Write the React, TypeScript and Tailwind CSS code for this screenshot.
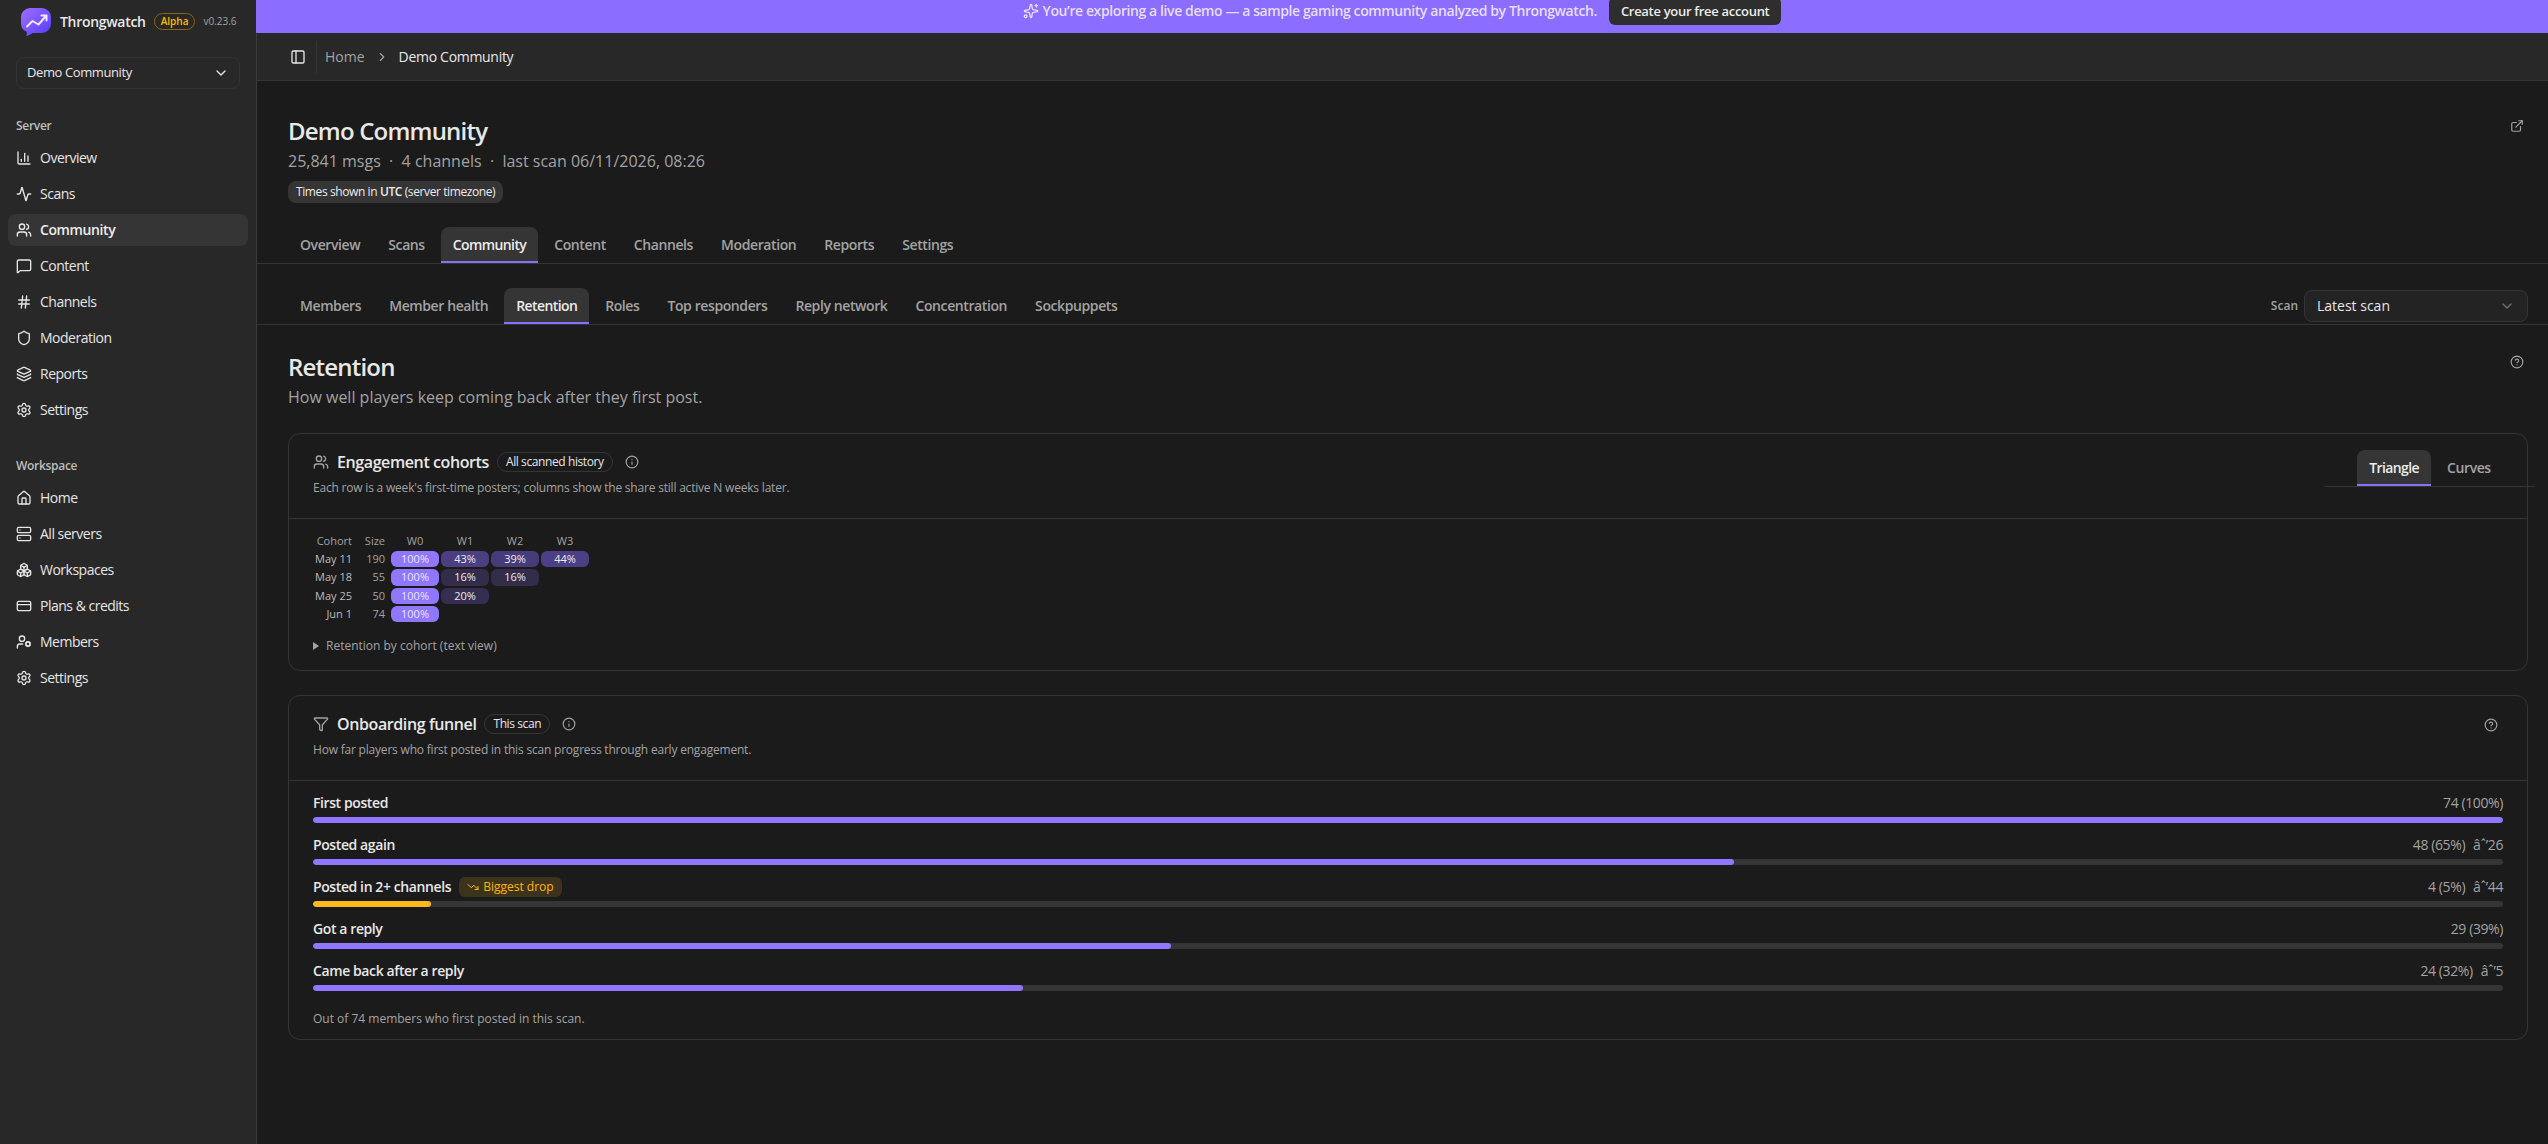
import React from 'react';
import {
  Activity,
  Boxes,
  ChartColumn,
  ChevronDown,
  ChevronRight,
  CircleHelp,
  CreditCard,
  ExternalLink,
  Funnel,
  Hash,
  House,
  Info,
  Layers,
  MessageSquare,
  PanelLeft,
  Server,
  Settings,
  Shield,
  Sparkles,
  TrendingDown,
  UserCog,
  Users,
} from 'lucide-react';

const serverNav = [
  { label: 'Overview', icon: ChartColumn },
  { label: 'Scans', icon: Activity },
  { label: 'Community', icon: Users, active: true },
  { label: 'Content', icon: MessageSquare },
  { label: 'Channels', icon: Hash },
  { label: 'Moderation', icon: Shield },
  { label: 'Reports', icon: Layers },
  { label: 'Settings', icon: Settings },
];

const workspaceNav = [
  { label: 'Home', icon: House },
  { label: 'All servers', icon: Server },
  { label: 'Workspaces', icon: Boxes },
  { label: 'Plans & credits', icon: CreditCard },
  { label: 'Members', icon: UserCog },
  { label: 'Settings', icon: Settings },
];

const mainTabs = ['Overview', 'Scans', 'Community', 'Content', 'Channels', 'Moderation', 'Reports', 'Settings'];

const subTabs = [
  'Members',
  'Member health',
  'Retention',
  'Roles',
  'Top responders',
  'Reply network',
  'Concentration',
  'Sockpuppets',
];

const cohorts = [
  { week: 'May 11', size: 190, values: [100, 43, 39, 44] },
  { week: 'May 18', size: 55, values: [100, 16, 16] },
  { week: 'May 25', size: 50, values: [100, 20] },
  { week: 'Jun 1', size: 74, values: [100] },
];

const cellColors: Record<number, string> = {
  100: 'bg-[#9177ff] text-[#e9e4fb]',
  44: 'bg-[#4c3f86] text-[#ececec]',
  43: 'bg-[#4b3f82] text-[#ececec]',
  39: 'bg-[#473c79] text-[#ececec]',
  20: 'bg-[#352e50] text-[#ececec]',
  16: 'bg-[#332d4a] text-[#ececec]',
};

const funnel = [
  { label: 'First posted', count: 74, pct: 100 },
  { label: 'Posted again', count: 48, pct: 65, drop: 'âˆ’26' },
  { label: 'Posted in 2+ channels', count: 4, pct: 5, drop: 'âˆ’44', biggest: true },
  { label: 'Got a reply', count: 29, pct: 39 },
  { label: 'Came back after a reply', count: 24, pct: 32, drop: 'âˆ’5' },
];

const Logo: React.FC = () => (
  <svg width="32" height="30" viewBox="0 0 32 30" fill="none">
    <defs>
      <linearGradient id="logo" x1="4" y1="2" x2="28" y2="28" gradientUnits="userSpaceOnUse">
        <stop stopColor="#9a6bff" />
        <stop offset="1" stopColor="#5b3fff" />
      </linearGradient>
    </defs>
    <path
      d="M10 1h12a9 9 0 0 1 9 9v7a9 9 0 0 1-9 9H13l-6.500 3.200 .3-4.400A9 9 0 0 1 1 17v-7a9 9 0 0 1 9-9z"
      fill="url(#logo)"
    />
    <path d="M7 19.500l5.500-5.500 6 3.500 7-8" stroke="#efe9ff" strokeWidth="2" strokeLinecap="round" strokeLinejoin="round" />
    <path d="M21.500 8.500h5v5" stroke="#efe9ff" strokeWidth="2" strokeLinecap="round" strokeLinejoin="round" />
  </svg>
);

type NavItem = { label: string; icon: React.ElementType; active?: boolean };

const NavGroup: React.FC<{ title: string; items: NavItem[] }> = ({ title, items }) => (
  <div className="px-2">
    <div className="flex h-8 items-center px-2 text-xs font-semibold tracking-[-0.3px] text-[#bdbdbd]">{title}</div>
    <ul className="flex flex-col gap-1">
      {items.map(({ label, icon: Icon, active }) => (
        <li
          key={label}
          className={
            active
              ? 'flex h-8 items-center gap-2 rounded-lg bg-[#353535] px-2 text-sm font-semibold tracking-[-0.4px] text-[#ececec]'
              : 'flex h-8 items-center gap-2 rounded-lg px-2 text-sm font-medium tracking-[-0.5px] text-[#e6e6e6]'
          }
        >
          <Icon className="size-4 shrink-0" />
          <span>{label}</span>
        </li>
      ))}
    </ul>
  </div>
);

const Tabs: React.FC<{ items: string[]; active: string }> = ({ items, active }) => (
  <div className="flex gap-1">
    {items.map((item) => (
      <div
        key={item}
        className={
          item === active
            ? 'flex h-9 items-center rounded-t-lg border-b-2 border-[#8b6dff] bg-[#353535] px-3 pt-0.5 text-sm font-semibold tracking-[-0.6px] text-[#ececec]'
            : 'flex h-9 items-center px-3 text-sm font-semibold tracking-[-0.4px] text-[#a3a3a3]'
        }
      >
        {item}
      </div>
    ))}
  </div>
);

const CardHeader: React.FC<{ icon: React.ElementType; title: string; badge: string; note: string; children?: React.ReactNode }> = ({
  icon: Icon,
  title,
  badge,
  note,
  children,
}) => (
  <div className="flex h-[85px] justify-between border-b border-[#353535] px-6 pt-4">
    <div>
      <div className="flex h-6 items-center">
        <Icon className="size-4 text-[#a3a3a3]" />
        <h3 className="ml-2 text-base font-semibold tracking-[-0.4px] text-[#e8e8e8]">{title}</h3>
        <span className="ml-2 flex h-5 items-center rounded-full border border-[#353535] px-2 text-xs font-medium tracking-[-0.4px] text-[#e6e6e6]">
          {badge}
        </span>
        <Info className="ml-3 size-3.5 text-[#a3a3a3]" />
      </div>
      <p className="mt-1 text-xs leading-5 tracking-[-0.2px] text-[#a3a3a3]">{note}</p>
    </div>
    {children}
  </div>
);

const CohortTable: React.FC = () => (
  <div className="flex flex-col gap-0.5 text-[11px] leading-4">
    <div className="flex gap-0.5 text-[#a3a3a3]">
      <span className="w-[39px] text-right">Cohort</span>
      <span className="mr-1 w-[31px] text-right">Size</span>
      {['W0', 'W1', 'W2', 'W3'].map((w) => (
        <span key={w} className="w-12 text-center">
          {w}
        </span>
      ))}
    </div>
    {cohorts.map((row) => (
      <div key={row.week} className="flex gap-0.5">
        <span className="w-[39px] text-right font-medium text-[#bdbdbd]">{row.week}</span>
        <span className="mr-1 w-[31px] text-right text-[#a3a3a3]">{row.size}</span>
        {row.values.map((v, i) => (
          <span key={i} className={`h-[16.3px] w-12 rounded-md text-center font-medium ${cellColors[v]}`}>
            {v}%
          </span>
        ))}
      </div>
    ))}
  </div>
);

const FunnelRows: React.FC = () => (
  <div className="flex flex-col gap-3">
    {funnel.map((step) => (
      <div key={step.label} className="flex h-[30px] flex-col justify-between">
        <div className="flex h-5 items-center justify-between text-sm">
          <div className="flex items-center gap-2">
            <span className="font-semibold tracking-[-0.4px] text-[#e8e8e8]">{step.label}</span>
            {step.biggest && (
              <span className="flex h-5 items-center gap-1 rounded-md bg-[#3d321b] px-2 text-xs font-medium text-[#ffb900]">
                <TrendingDown className="size-3" />
                Biggest drop
              </span>
            )}
          </div>
          <div className="flex gap-2 tracking-[-0.4px] text-[#a3a3a3]">
            <span>
              {step.count} ({step.pct}%)
            </span>
            {step.drop && <span>{step.drop}</span>}
          </div>
        </div>
        <div className="h-1.5 overflow-hidden rounded-full bg-[#353535]">
          <div
            className={step.biggest ? 'h-full rounded-full bg-[#ffb91f]' : 'h-full rounded-full bg-[#9177ff]'}
            style={{ width: `${(step.count / 74) * 100}%` }}
          />
        </div>
      </div>
    ))}
  </div>
);

export default function App() {
  return (
    <div className="flex h-[1144px] w-[2548px] overflow-hidden bg-[#1b1b1b] font-['Open_Sans',sans-serif]">
      <aside className="flex w-[257px] shrink-0 flex-col border-r border-[#3a3a3a] bg-[#282828]">
        <div className="flex h-[43px] items-center pl-5">
          <Logo />
          <span className="ml-2 text-sm font-semibold tracking-[-0.3px] text-[#e8e8e8]">Throngwatch</span>
          <span className="ml-2 flex h-[17px] items-center rounded-full border border-[#8a6510] px-1.5 text-[10px] font-semibold text-[#ffb900]">
            Alpha
          </span>
          <span className="ml-2 text-[10px] text-[#a3a3a3]">v0.23.6</span>
        </div>
        <div className="mx-4 mt-3.5 flex h-8 items-center justify-between rounded-lg border border-[#333] px-2.5 text-[13px] text-[#e6e6e6]">
          <span className="tracking-[-0.4px]">Demo Community</span>
          <ChevronDown className="size-4" />
        </div>
        <div className="mt-[21px] flex flex-col gap-6">
          <NavGroup title="Server" items={serverNav} />
          <NavGroup title="Workspace" items={workspaceNav} />
        </div>
      </aside>

      <div className="flex min-w-0 flex-1 flex-col">
        <div className="-ml-px flex h-[33px] shrink-0 justify-center bg-[#8b6dff] text-sm font-semibold text-[#e6defc]">
          <div className="-mt-px flex h-6 items-center">
            <Sparkles className="size-4" />
            <span className="ml-1 tracking-[-0.4px]">
              You’re exploring a live demo — a sample gaming community analyzed by Throngwatch.
            </span>
            <span className="ml-3 flex h-7 items-center rounded-md bg-[#2e2e2e] px-3 text-[13px] tracking-[-0.3px] text-[#ececec]">
              Create your free account
            </span>
          </div>
        </div>
        <header className="flex h-12 shrink-0 items-center border-b border-[#353535] bg-[#282828] pl-[33px] text-sm">
          <PanelLeft className="size-4 text-[#e6e6e6]" />
          <div className="ml-2.5 h-8 w-px bg-[#353535]" />
          <span className="ml-2 text-[#a3a3a3]">Home</span>
          <ChevronRight className="mx-2.5 size-3.5 text-[#a3a3a3]" />
          <span className="tracking-[-0.3px] text-[#e8e8e8]">Demo Community</span>
        </header>

        <div className="flex justify-between pt-8 pr-5 pl-[31px]">
          <div>
            <h1 className="text-2xl leading-9 font-semibold tracking-[-0.8px] text-[#e8e8e8]">Demo Community</h1>
            <p className="text-base leading-6 whitespace-pre text-[#a3a3a3]">25,841 msgs  ·  4 channels  ·  last scan 06/11/2026, 08:26</p>
            <div className="mt-2 flex h-[22px] w-fit items-center rounded-lg bg-[#353535] px-2 text-xs font-medium tracking-[-0.4px] text-[#ececec]">
              <span>
                Times shown in <span className="font-semibold">UTC</span> (server timezone)
              </span>
            </div>
          </div>
          <ExternalLink className="mt-1.5 mr-1 size-3.5 text-[#a3a3a3]" />
        </div>

        <div className="mt-6 border-b border-[#353535] pl-[31px]">
          <Tabs items={mainTabs} active="Community" />
        </div>
        <div className="flex h-[61px] items-end justify-between border-b border-[#353535] pr-5 pl-[31px]">
          <Tabs items={subTabs} active="Retention" />
          <div className="mb-0.5 flex items-center gap-1.5">
            <span className="text-xs font-semibold text-[#a3a3a3]">Scan</span>
            <div className="flex h-8 w-56 items-center justify-between rounded-lg border border-[#353535] bg-[#232323] px-3 text-sm text-[#e6e6e6]">
              <span>Latest scan</span>
              <ChevronDown className="size-4 text-[#6f6f6f]" />
            </div>
          </div>
        </div>

        <main className="flex flex-col pr-5 pl-[31px]">
          <div className="flex justify-between pt-6">
            <div>
              <h2 className="text-2xl leading-9 font-semibold tracking-[-0.8px] text-[#e8e8e8]">Retention</h2>
              <p className="text-base leading-6 text-[#a3a3a3]">How well players keep coming back after they first post.</p>
            </div>
            <CircleHelp className="mt-1.5 mr-1 size-3.5 text-[#a3a3a3]" />
          </div>

          <section className="mt-6 h-[238px] rounded-xl border border-[#353535]">
            <CardHeader
              icon={Users}
              title="Engagement cohorts"
              badge="All scanned history"
              note="Each row is a week's first-time posters; columns show the share still active N weeks later."
            >
              <div className="-mr-8 flex h-[37px] w-[210px] justify-center border-b border-[#353535]">
                <Tabs items={['Triangle', 'Curves']} active="Triangle" />
              </div>
            </CardHeader>
            <div className="px-6 pt-3.5">
              <CohortTable />
              <div className="mt-4 flex items-center gap-[7px] text-xs text-[#a3a3a3]">
                <svg width="6" height="8" viewBox="0 0 6 8">
                  <path d="M0 0l6 4-6 4z" fill="currentColor" />
                </svg>
                <span>Retention by cohort (text view)</span>
              </div>
            </div>
          </section>

          <section className="mt-6 h-[345px] rounded-xl border border-[#353535]">
            <CardHeader
              icon={Funnel}
              title="Onboarding funnel"
              badge="This scan"
              note="How far players who first posted in this scan progress through early engagement."
            >
              <CircleHelp className="mt-1.5 mr-[5px] size-3.5 text-[#a3a3a3]" />
            </CardHeader>
            <div className="px-6 pt-3">
              <FunnelRows />
              <p className="mt-5 text-xs text-[#a3a3a3]">Out of 74 members who first posted in this scan.</p>
            </div>
          </section>
        </main>
      </div>
    </div>
  );
}
